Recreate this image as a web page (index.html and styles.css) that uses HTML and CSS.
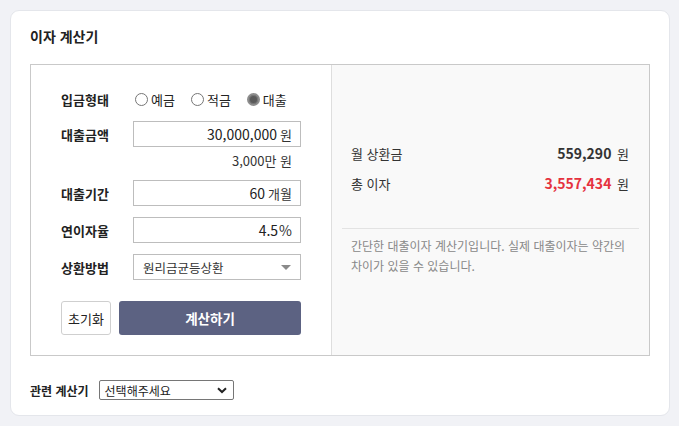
FILE: index.html
```html
<!DOCTYPE html>
<html lang="ko">
<head>
<meta charset="utf-8">
<link rel="stylesheet" href="styles.css">
</head>
<body>
<div class="card">
  <h1 class="title">이자 계산기</h1>
  <div class="calc">
    <div class="form">
      <div class="row radio-row">
        <span class="label">입금형태</span>
        <div class="radios">
          <span class="radio"><span class="dot"></span>예금</span>
          <span class="radio"><span class="dot"></span>적금</span>
          <span class="radio"><span class="dot on"></span>대출</span>
        </div>
      </div>
      <div class="row">
        <span class="label">대출금액</span>
        <div class="field"><span class="num">30,000,000</span><span class="unit">원</span></div>
      </div>
      <div class="hint">3,000만 원</div>
      <div class="row">
        <span class="label">대출기간</span>
        <div class="field"><span class="num">60</span><span class="unit">개월</span></div>
      </div>
      <div class="row">
        <span class="label">연이자율</span>
        <div class="field"><span class="num">4.5</span><span class="unit pct">%</span></div>
      </div>
      <div class="row">
        <span class="label">상환방법</span>
        <div class="field select"><span>원리금균등상환</span><span class="tri"></span></div>
      </div>
      <div class="buttons">
        <button class="btn-reset">초기화</button>
        <button class="btn-calc">계산하기</button>
      </div>
    </div>
    <div class="result">
      <div class="res-rows">
        <div class="res-row"><span>월 상환금</span><span class="val"><b>559,290</b> 원</span></div>
        <div class="res-row"><span>총 이자</span><span class="val"><b class="red">3,557,434</b> 원</span></div>
      </div>
      <p class="note">간단한 대출이자 계산기입니다. 실제 대출이자는 약간의 차이가 있을 수 있습니다.</p>
    </div>
  </div>
  <div class="related">
    <span class="rel-label">관련 계산기</span>
    <div class="rel-select"><span>선택해주세요</span>
      <svg width="10" height="7" viewBox="0 0 10 7"><path d="M1 1.2 L5 5 L9 1.2" fill="none" stroke="#222" stroke-width="2"/></svg>
    </div>
  </div>
</div>
</body>
</html>
```

FILE: styles.css
```css
* { box-sizing: border-box; }
html, body { margin: 0; padding: 0; }
body {
  background: #f1f2f6;
  font-family: "Noto Sans CJK KR", "Noto Sans", sans-serif;
  color: #222;
  padding: 10px 9px 10px 10px;
}
.card {
  background: #fff;
  border: 1px solid #e4e6eb;
  border-radius: 9px;
  padding: 14px 19px 15px 19px;
  height: 406px;
}
.title {
  margin: 0;
  font-size: 14px;
  font-weight: 700;
  line-height: 22px;
  color: #222;
}
.calc {
  margin-top: 17px;
  display: grid;
  grid-template-columns: 301px 1fr;
  border: 1px solid #c9c9c9;
  height: 292px;
}
.form {
  padding: 22px 0 0 30px;
  border-right: 1px solid #dedede;
}
.row {
  display: flex;
  align-items: center;
  height: 26px;
  margin-bottom: 11px;
}
.radio-row { height: 24px; margin-bottom: 10px; }
.label {
  width: 72px;
  font-size: 13px;
  font-weight: 700;
  color: #222;
}
.radios { display: flex; align-items: center; font-size: 13px; color: #222; }
.radio { display: flex; align-items: center; margin-right: 14px; }
.dot {
  width: 13px; height: 13px;
  border: 1px solid #767676;
  border-radius: 50%;
  margin: 0 3px 0 2px;
  background: #fff;
}
.dot.on {
  background: #5a5a5a;
  border: 2px solid #8d8d8d;
  box-shadow: inset 0 0 0 1px #777;
}
.field {
  width: 168px; height: 26px;
  border: 1px solid #bdbdbd;
  display: flex; align-items: center; justify-content: flex-end;
  padding: 0 8px;
  font-size: 14px;
  color: #222;
}
.field .unit { margin-left: 3px; font-size: 13px; color: #333; }
.field .pct { margin-left: 1px; font-size: 14px; }
.hint {
  margin: -7px 0 9px 0;
  width: 231px;
  text-align: right;
  font-size: 13px;
  line-height: 20px;
  color: #333;
}
.select {
  justify-content: space-between;
  padding: 0 9px 0 9px;
  font-size: 12.5px;
  color: #333;
}
.tri {
  width: 0; height: 0;
  border-left: 5px solid transparent;
  border-right: 5px solid transparent;
  border-top: 5px solid #8a8a8a;
}
.buttons { display: flex; margin-top: 21px; }
.btn-reset {
  width: 50px; height: 34px;
  background: #fff;
  border: 1px solid #cfcfcf;
  border-radius: 3px;
  font-family: inherit;
  font-size: 13px;
  color: #222;
  padding: 0;
}
.btn-calc {
  margin-left: 8px;
  width: 182px; height: 34px;
  background: #5c6282;
  border: none;
  border-radius: 3px;
  color: #fff;
  font-family: inherit;
  font-size: 13.5px;
  font-weight: 700;
  padding: 0;
}
.result {
  background: #f9f9f9;
  padding: 73px 10px 0 10px;
}
.res-row {
  display: flex; justify-content: space-between; align-items: center;
  height: 30px;
  padding: 0 10px 0 9px;
  font-size: 13px;
  color: #333;
}
.val { font-size: 13px; color: #333; }
.val b { font-size: 14px; font-weight: 700; color: #333; margin-right: 2px; }
.val b.red { color: #e5323e; }
.note {
  margin: 30px 0 0 0;
  border-top: 1px solid #e3e3e3;
  padding: 7px 10px 0 9px;
  font-size: 12px;
  line-height: 20px;
  color: #888;
}
.related {
  display: flex; align-items: center;
  margin-top: 24px;
}
.rel-label {
  font-size: 12px; font-weight: 700; color: #222;
  margin-right: 10px;
}
.rel-select {
  width: 135px; height: 20px;
  border: 1px solid #767676;
  border-radius: 2px;
  display: flex; align-items: center; justify-content: space-between;
  padding: 0 6px 0 5px;
  font-size: 12px;
  color: #222;
}
```
